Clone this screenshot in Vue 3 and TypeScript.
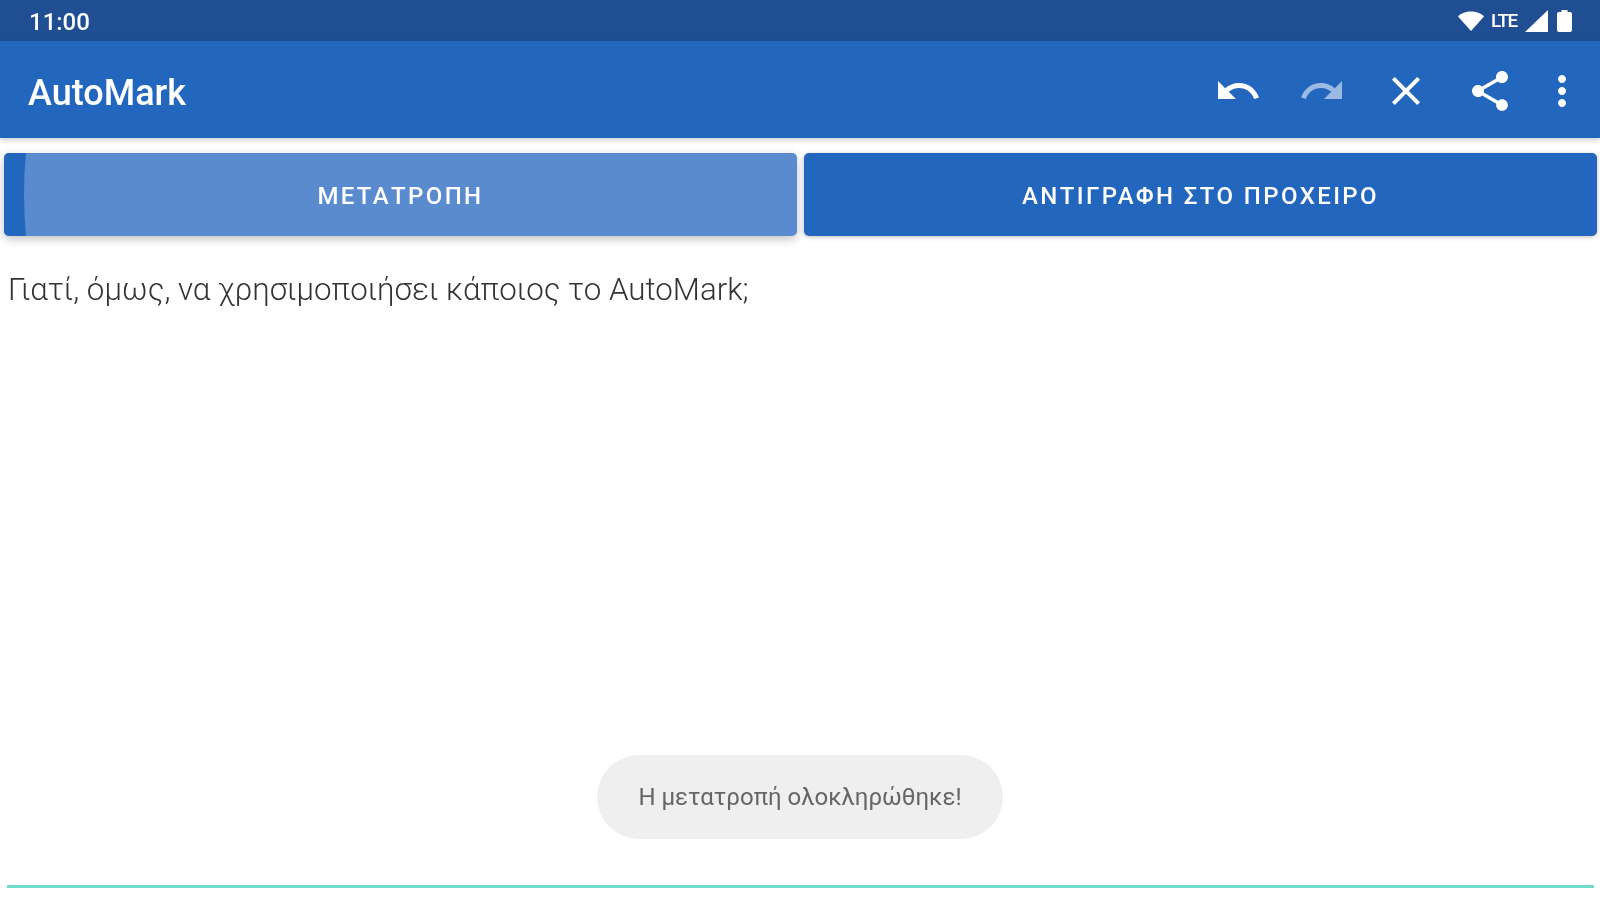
<script setup lang="ts">
const message = 'Γιατί, όμως, να χρησιμοποιήσει κάποιος το AutoMark;';
const toast = 'Η μετατροπή ολοκληρώθηκε!';
</script>

<template>
  <div class="screen">
    <div class="status-bar">
      <span class="clock">11:00</span>
      <div class="status-icons">
        <svg class="wifi" width="26" height="20" viewBox="0 0 26 20">
          <path d="M0 5.5 C3 2 8 .5 13 .5 C18 .5 23 2 26 5.5 L13 20 Z" fill="#fff" />
        </svg>
        <span class="lte">LTE</span>
        <svg width="23" height="22" viewBox="0 0 23 22">
          <path d="M23 0 V22 H0 Z" fill="#fff" />
        </svg>
        <svg class="battery" width="15" height="22" viewBox="0 0 15 22">
          <path d="M4.5 0 H10.5 V2 H13 A2 2 0 0 1 15 4 V20 A2 2 0 0 1 13 22 H2 A2 2 0 0 1 0 20 V4 A2 2 0 0 1 2 2 H4.5 Z" fill="#fff" />
        </svg>
      </div>
    </div>

    <header class="app-bar">
      <h1 class="title">AutoMark</h1>
      <div class="actions">
        <svg class="icon undo" viewBox="0 0 24 24"><path d="M12.5 8c-2.65 0-5.05.99-6.9 2.6L2 7v9h9l-3.62-3.62c1.39-1.16 3.16-1.88 5.12-1.88 3.54 0 6.55 2.31 7.6 5.5l2.37-.78C21.08 11.03 17.15 8 12.5 8z" /></svg>
        <svg class="icon redo" viewBox="0 0 24 24"><path d="M18.4 10.6C16.55 8.99 14.15 8 11.5 8c-4.65 0-8.58 3.03-9.96 7.22L3.9 16c1.05-3.19 4.05-5.5 7.6-5.5 1.95 0 3.73.72 5.12 1.88L13 16h9V7l-3.6 3.6z" /></svg>
        <svg class="icon close" viewBox="0 0 24 24"><path d="M19 6.41 17.59 5 12 10.59 6.41 5 5 6.41 10.59 12 5 17.59 6.41 19 12 13.41 17.59 19 19 17.59 13.41 12z" /></svg>
        <svg class="icon share" viewBox="0 0 24 24"><path d="M18 16.08c-.76 0-1.44.3-1.96.77L8.91 12.7c.05-.23.09-.46.09-.7s-.04-.47-.09-.7l7.05-4.11c.54.5 1.25.81 2.04.81 1.66 0 3-1.34 3-3s-1.34-3-3-3-3 1.34-3 3c0 .24.04.47.09.7L8.04 9.81C7.5 9.31 6.79 9 6 9c-1.66 0-3 1.34-3 3s1.34 3 3 3c.79 0 1.5-.31 2.04-.81l7.12 4.16c-.05.21-.08.43-.08.65 0 1.61 1.31 2.92 2.92 2.92 1.61 0 2.92-1.31 2.92-2.92s-1.31-2.92-2.92-2.92z" /></svg>
        <svg class="icon more" viewBox="0 0 24 24"><path d="M12 8c1.1 0 2-.9 2-2s-.9-2-2-2-2 .9-2 2 .9 2 2 2zm0 2c-1.1 0-2 .9-2 2s.9 2 2 2 2-.9 2-2-.9-2-2-2zm0 6c-1.1 0-2 .9-2 2s.9 2 2 2 2-.9 2-2-.9-2-2-2z" /></svg>
      </div>
    </header>

    <div class="buttons">
      <button class="btn btn--pressed">
        <svg class="ripple" viewBox="0 0 22 83" preserveAspectRatio="none"><path d="M0 0H22Q18 41 22 83H0Z" /></svg>
        <span class="btn-label">ΜΕΤΑΤΡΟΠΗ</span>
      </button>
      <button class="btn"><span class="btn-label">ΑΝΤΙΓΡΑΦΗ ΣΤΟ ΠΡΟΧΕΙΡΟ</span></button>
    </div>

    <p class="message">{{ message }}</p>

    <div class="field-line"></div>

    <div class="toast">{{ toast }}</div>
  </div>
</template>

<style scoped>
.screen {
  position: relative;
  display: flex;
  flex-direction: column;
  width: 1600px;
  height: 900px;
  overflow: hidden;
  background: #fff;
  font-family: Roboto, "Noto Sans", sans-serif;
  filter: blur(0.6px);
}
.status-bar {
  display: flex;
  align-items: center;
  justify-content: space-between;
  box-sizing: border-box;
  height: 41px;
  padding: 3px 28px 0 29px;
  background: #1f4e92;
  color: #fff;
}
.clock {
  font-size: 24px;
  font-weight: 500;
}
.status-icons {
  display: flex;
  align-items: center;
  margin-top: -3px;
}
.wifi {
  margin-right: 7px;
}
.lte {
  width: 32px;
  margin-right: 2px;
  font-size: 19px;
  font-weight: 500;
  letter-spacing: -1.5px;
  white-space: nowrap;
}
.battery {
  margin-left: 9px;
}
.app-bar {
  display: flex;
  align-items: center;
  justify-content: space-between;
  flex: none;
  box-sizing: border-box;
  height: 97px;
  padding: 3px 14px 0 28px;
  background: #2366bd;
  box-shadow: 0 2px 5px rgba(0, 0, 0, 0.2);
  color: #fff;
  z-index: 1;
}
.title {
  margin: 3px 0 0;
  font-size: 36px;
  font-weight: 500;
  line-height: 1;
}
.actions {
  display: flex;
  align-items: center;
  gap: 36px;
  margin-right: 0;
}
.icon {
  width: 48px;
  height: 48px;
  fill: #fff;
}
.redo {
  fill: rgba(255, 255, 255, 0.55);
}
.more {
  width: 48px;
  margin-left: -12px;
}
.buttons {
  display: flex;
  flex: none;
  gap: 7px;
  padding: 15px 3px 0 4px;
}
.btn {
  position: relative;
  flex: 1;
  height: 83px;
  padding: 2px 0 0;
  overflow: hidden;
  border: none;
  border-radius: 5px;
  background: #2366bd;
  box-shadow: 0 1px 4px rgba(0, 0, 0, 0.25);
  color: #fff;
  font-family: inherit;
  font-size: 24px;
  font-weight: 500;
  letter-spacing: 2.4px;
}
.btn--pressed {
  background: #5a8bcf;
  box-shadow: 0 3px 10px rgba(0, 0, 0, 0.25);
}
.ripple {
  position: absolute;
  top: 0;
  left: 0;
  width: 22px;
  height: 100%;
  fill: #2366bd;
}
.btn-label {
  position: relative;
}
.message {
  margin: 34px 0 0 8px;
  color: #333;
  font-size: 31.3px;
  font-weight: 300;
  line-height: 40px;
}
.field-line {
  flex: none;
  height: 3px;
  margin: auto 6px 12px 7px;
  background: #6edcc8;
}
.toast {
  position: absolute;
  top: 755px;
  left: 597px;
  display: flex;
  align-items: center;
  justify-content: center;
  width: 406px;
  height: 84px;
  border-radius: 42px;
  background: #efefef;
  color: #666;
  font-size: 24px;
}
</style>
